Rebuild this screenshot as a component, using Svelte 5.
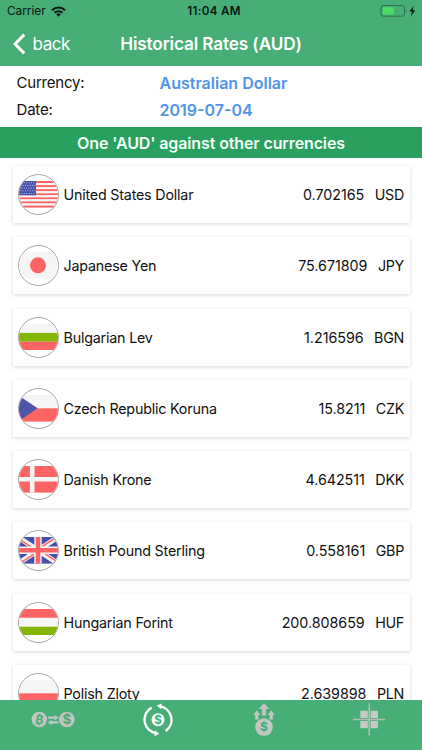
<script>
  const rates = [
    { code: 'USD', name: 'United States Dollar', value: '0.702165' },
    { code: 'JPY', name: 'Japanese Yen', value: '75.671809' },
    { code: 'BGN', name: 'Bulgarian Lev', value: '1.216596' },
    { code: 'CZK', name: 'Czech Republic Koruna', value: '15.8211' },
    { code: 'DKK', name: 'Danish Krone', value: '4.642511' },
    { code: 'GBP', name: 'British Pound Sterling', value: '0.558161' },
    { code: 'HUF', name: 'Hungarian Forint', value: '200.808659' },
    { code: 'PLN', name: 'Polish Zloty', value: '2.639898' }
  ];

  // horizontal stripes, top to bottom
  const stripes = {
    BGN: ['#f5f5f5', '#83b600', '#ff6465'],
    CZK: ['#f5f5f5', '#ff6465'],
    HUF: ['#ff6465', '#f5f5f5', '#83b600'],
    PLN: ['#f5f5f5', '#ff6465'],
    USD: Array(13).fill(0).map((_, i) => (i % 2 ? '#f5f5f5' : '#ff6465'))
  };

  const stars = Array(35).fill(0).map((_, i) => ({
    x: 1.4 + (i % 7) * 2.4 + (Math.floor(i / 7) % 2) * 1.2,
    y: 1.7 + Math.floor(i / 7) * 2.7
  }));
</script>

<div class="screen">
  <header>
    <div class="status">
      <div class="side">
        <span>Carrier</span>
        <svg width="15" height="11" viewBox="0 0 15 11">
          <g fill="none" stroke="#07140d" stroke-width="2">
            <path d="M1 4.2a9.2 9.2 0 0 1 13 0" />
            <path d="M3.5 6.8a5.7 5.7 0 0 1 8 0" />
          </g>
          <path d="M5.2 8.3a3.3 3.3 0 0 1 4.6 0L7.5 10.7z" fill="#07140d" />
        </svg>
      </div>
      <span class="clock">11:04 AM</span>
      <div class="side right">
        <svg width="37" height="12" viewBox="0 0 37 12">
          <rect x="1" y=".5" width="23.5" height="10.7" rx="2.6" fill="none" stroke="#2d7149" />
          <rect x="2.7" y="2.2" width="11.3" height="7.3" rx="1" fill="#4cdc64" />
          <path d="M26 4.2q1.6 1.7 0 3.5z" fill="#2d7149" />
          <path d="M33.6.8 29.5 6.6h2.6l-1.2 4.6 4.3-6h-2.6z" fill="#07140d" />
        </svg>
      </div>
    </div>
    <nav>
      <button class="back">
        <svg width="13" height="22" viewBox="0 0 13 22">
          <path d="M11.3 1.6 2 11l9.3 9.4" fill="none" stroke="#fff" stroke-width="3" />
        </svg>
        <span>back</span>
      </button>
      <h1>Historical Rates (AUD)</h1>
    </nav>
  </header>

  <section class="info">
    <span>Currency:</span><b>Australian Dollar</b>
    <span>Date:</span><b>2019-07-04</b>
  </section>

  <h2>One 'AUD' against other currencies</h2>

  <main>
    {#each rates as rate}
      <div class="card">
        <div class="flag">
          <svg width="40" height="26.6" viewBox="0 0 40 26.6">
            {#if stripes[rate.code]}
              {#each stripes[rate.code] as color, i}
                <rect y={(i * 26.6) / stripes[rate.code].length} width="40" height={26.6 / stripes[rate.code].length} fill={color} />
              {/each}
            {/if}
            {#if rate.code === 'USD'}
              <rect width="18" height="14.3" fill="#464faa" />
              {#each stars as star}
                <circle cx={star.x} cy={star.y} r=".55" fill="#d5d7f0" />
              {/each}
            {:else if rate.code === 'JPY'}
              <rect width="40" height="26.6" fill="#f5f5f5" />
              <circle cx="20" cy="13.3" r="8" fill="#ff6465" />
            {:else if rate.code === 'CZK'}
              <path d="M0 0 19.6 13.3 0 26.6z" fill="#4e55a6" />
            {:else if rate.code === 'DKK'}
              <rect width="40" height="26.6" fill="#ff6465" />
              <path d="M14.2 0v26.6M0 13.3h40" stroke="#f5f5f5" stroke-width="4.6" />
            {:else if rate.code === 'GBP'}
              <rect width="40" height="26.6" fill="#464faa" />
              <path d="M0 0 40 26.6M40 0 0 26.6" stroke="#f5f5f5" stroke-width="5" />
              <path d="M0 1.2 18 13.3M22 13.3 40 25.4M38.5 0 20 12.3M20 14.3 1.5 26.6" stroke="#ff6465" stroke-width="1.6" />
              <path d="M20 0v26.6M0 13.3h40" stroke="#f5f5f5" stroke-width="7.4" />
              <path d="M20 0v26.6M0 13.3h40" stroke="#ff6465" stroke-width="4.6" />
            {/if}
          </svg>
        </div>
        <span class="name">{rate.name}</span>
        <span class="value">{rate.value}</span>
        <span class="code">{rate.code}</span>
      </div>
    {/each}
  </main>

  <footer>
    <button>
      <svg width="44" height="34" viewBox="0 0 44 34">
        <circle cx="8.3" cy="16.5" r="7.8" fill="#c3c5c1" />
        <circle cx="35.8" cy="16.5" r="7.8" fill="#c3c5c1" />
        <text x="8.3" y="20.7" class="coin" font-size="12" font-style="italic">B</text>
        <path d="m8.6 10.3-.3 2M8 20.5l-.3 2" stroke="#47ae77" stroke-width="1.5" />
        <text x="35.8" y="21.3" class="coin" font-size="13.5">$</text>
        <path d="M17.2 13.6h6.6v-1.8l4 2.9-4 2.7v-1.7h-6.6zM27.4 18.3h-6.6v-1.6l-4 2.7 4 2.8v-1.8h6.6z" fill="#c3c5c1" />
      </svg>
    </button>
    <button>
      <svg width="34" height="34" viewBox="0 0 34 34">
        <circle cx="17" cy="16.7" r="6.5" fill="#fff" />
        <text x="17" y="20.9" class="coin" font-size="11.5">$</text>
        <g fill="none" stroke="#fff" stroke-width="2.4">
          <path d="M18.5 3.2a13.7 13.7 0 0 1 6.2 24.8" />
          <path d="M15.5 30.2A13.7 13.7 0 0 1 10.6 4.6" />
        </g>
        <path d="m15.6 2.4 5.2-2-1 5.6zM18.4 31l-5.2 2 1-5.6z" fill="#fff" />
      </svg>
    </button>
    <button>
      <svg width="24" height="34" viewBox="0 0 24 34">
        <circle cx="12" cy="24" r="8.8" fill="#c3c5c1" />
        <text x="12" y="28.3" class="coin" font-size="12">$</text>
        <path d="m12 0 5.2 6h-3.1v6.5H9.9V6H6.8zM4.8 7.3 8.3 12H6.4v4.4H3.2V12H1.3zM19.2 7.3l3.5 4.7h-1.9v4.4h-3.2V12h-1.9z" fill="#c3c5c1" />
      </svg>
    </button>
    <button>
      <svg width="34" height="34" viewBox="0 0 34 34">
        <path d="M8.4 7.7h7.4v7.4H8.4zM18.6 7.7h7.3v7.4h-7.3zM8.4 17.9h7.4v7.3H8.4zM18.6 17.9h7.3v7.3h-7.3z" fill="#c8cac6" />
        <path d="M17.2.3v32.2M1.2 16.5h32" stroke="#b5bdb5" stroke-width="1.5" />
      </svg>
    </button>
  </footer>
</div>

<style>
  :global(body) {
    margin: 0;
  }
  .screen {
    display: flex;
    flex-direction: column;
    width: 422px;
    height: 750px;
    overflow: hidden;
    background: #fff;
    color: #111;
    font-family: Inter, Roboto, sans-serif;
  }
  svg {
    display: block;
    flex: none;
  }
  button {
    padding: 0;
    border: none;
    background: none;
    font: inherit;
    color: inherit;
  }
  header {
    flex: none;
    height: 65.5px;
    background: #47ae77;
  }
  .status {
    display: flex;
    align-items: center;
    height: 22px;
    padding: 0 5px 0 7px;
    font-size: 11.8px;
    color: #07140d;
  }
  .side {
    display: flex;
    flex: 1;
    align-items: center;
    gap: 5px;
  }
  .right {
    justify-content: flex-end;
  }
  .clock {
    font-weight: 600;
    font-size: 11.6px;
    letter-spacing: 0.35px;
    margin-left: 4px;
  }
  nav {
    display: grid;
    grid-template-columns: 1fr auto 1fr;
    align-items: center;
    height: 43px;
    color: #fff;
  }
  .back {
    display: flex;
    align-items: center;
    gap: 6.5px;
    padding-left: 13px;
    font-size: 17px;
    letter-spacing: -0.45px;
  }
  h1 {
    margin: 0;
    font-size: 17.2px;
    font-weight: 600;
    letter-spacing: -0.13px;
  }
  .info {
    display: grid;
    flex: none;
    grid-template-columns: 143px 1fr;
    align-content: center;
    box-sizing: border-box;
    height: 61.5px;
    padding: 1px 0 0 16.5px;
    line-height: 26.5px;
    font-size: 15px;
    letter-spacing: -0.2px;
  }
  .info b {
    font-weight: 600;
    font-size: 16px;
    letter-spacing: 0;
    color: #4f94e8;
  }
  h2 {
    flex: none;
    height: 31px;
    margin: 0;
    background: #29a060;
    color: #f4fff8;
    font-size: 16px;
    font-weight: 600;
    letter-spacing: -0.12px;
    line-height: 32px;
    text-align: center;
  }
  main {
    display: flex;
    flex: 1;
    flex-direction: column;
    gap: 14.25px;
    min-height: 0;
    padding: 8px 12.5px 0 12.5px;
    overflow: hidden;
  }
  .card {
    display: flex;
    flex: none;
    align-items: center;
    box-sizing: border-box;
    height: 57px;
    padding: 0 5.5px 0 5px;
    background: #fff;
    box-shadow: 0 1px 4px rgba(0, 0, 0, 0.16);
    font-size: 14.3px;
  }
  .flag {
    display: flex;
    align-items: center;
    justify-content: center;
    box-sizing: border-box;
    width: 41px;
    height: 41px;
    border: 1px solid #a5a5a8;
    border-radius: 50%;
    overflow: hidden;
  }
  .name {
    flex: 1;
    margin-left: 5px;
    letter-spacing: -0.2px;
  }
  .value {
    letter-spacing: -0.03px;
  }
  .code {
    margin-left: 10.5px;
    letter-spacing: -0.3px;
  }
  footer {
    display: grid;
    flex: none;
    grid-template-columns: repeat(4, 1fr);
    height: 50.5px;
    background: #47ae77;
  }
  footer button {
    display: flex;
    justify-content: center;
    padding-top: 3px;
  }
  .coin {
    fill: #47ae77;
    font-weight: 700;
    text-anchor: middle;
  }
</style>
